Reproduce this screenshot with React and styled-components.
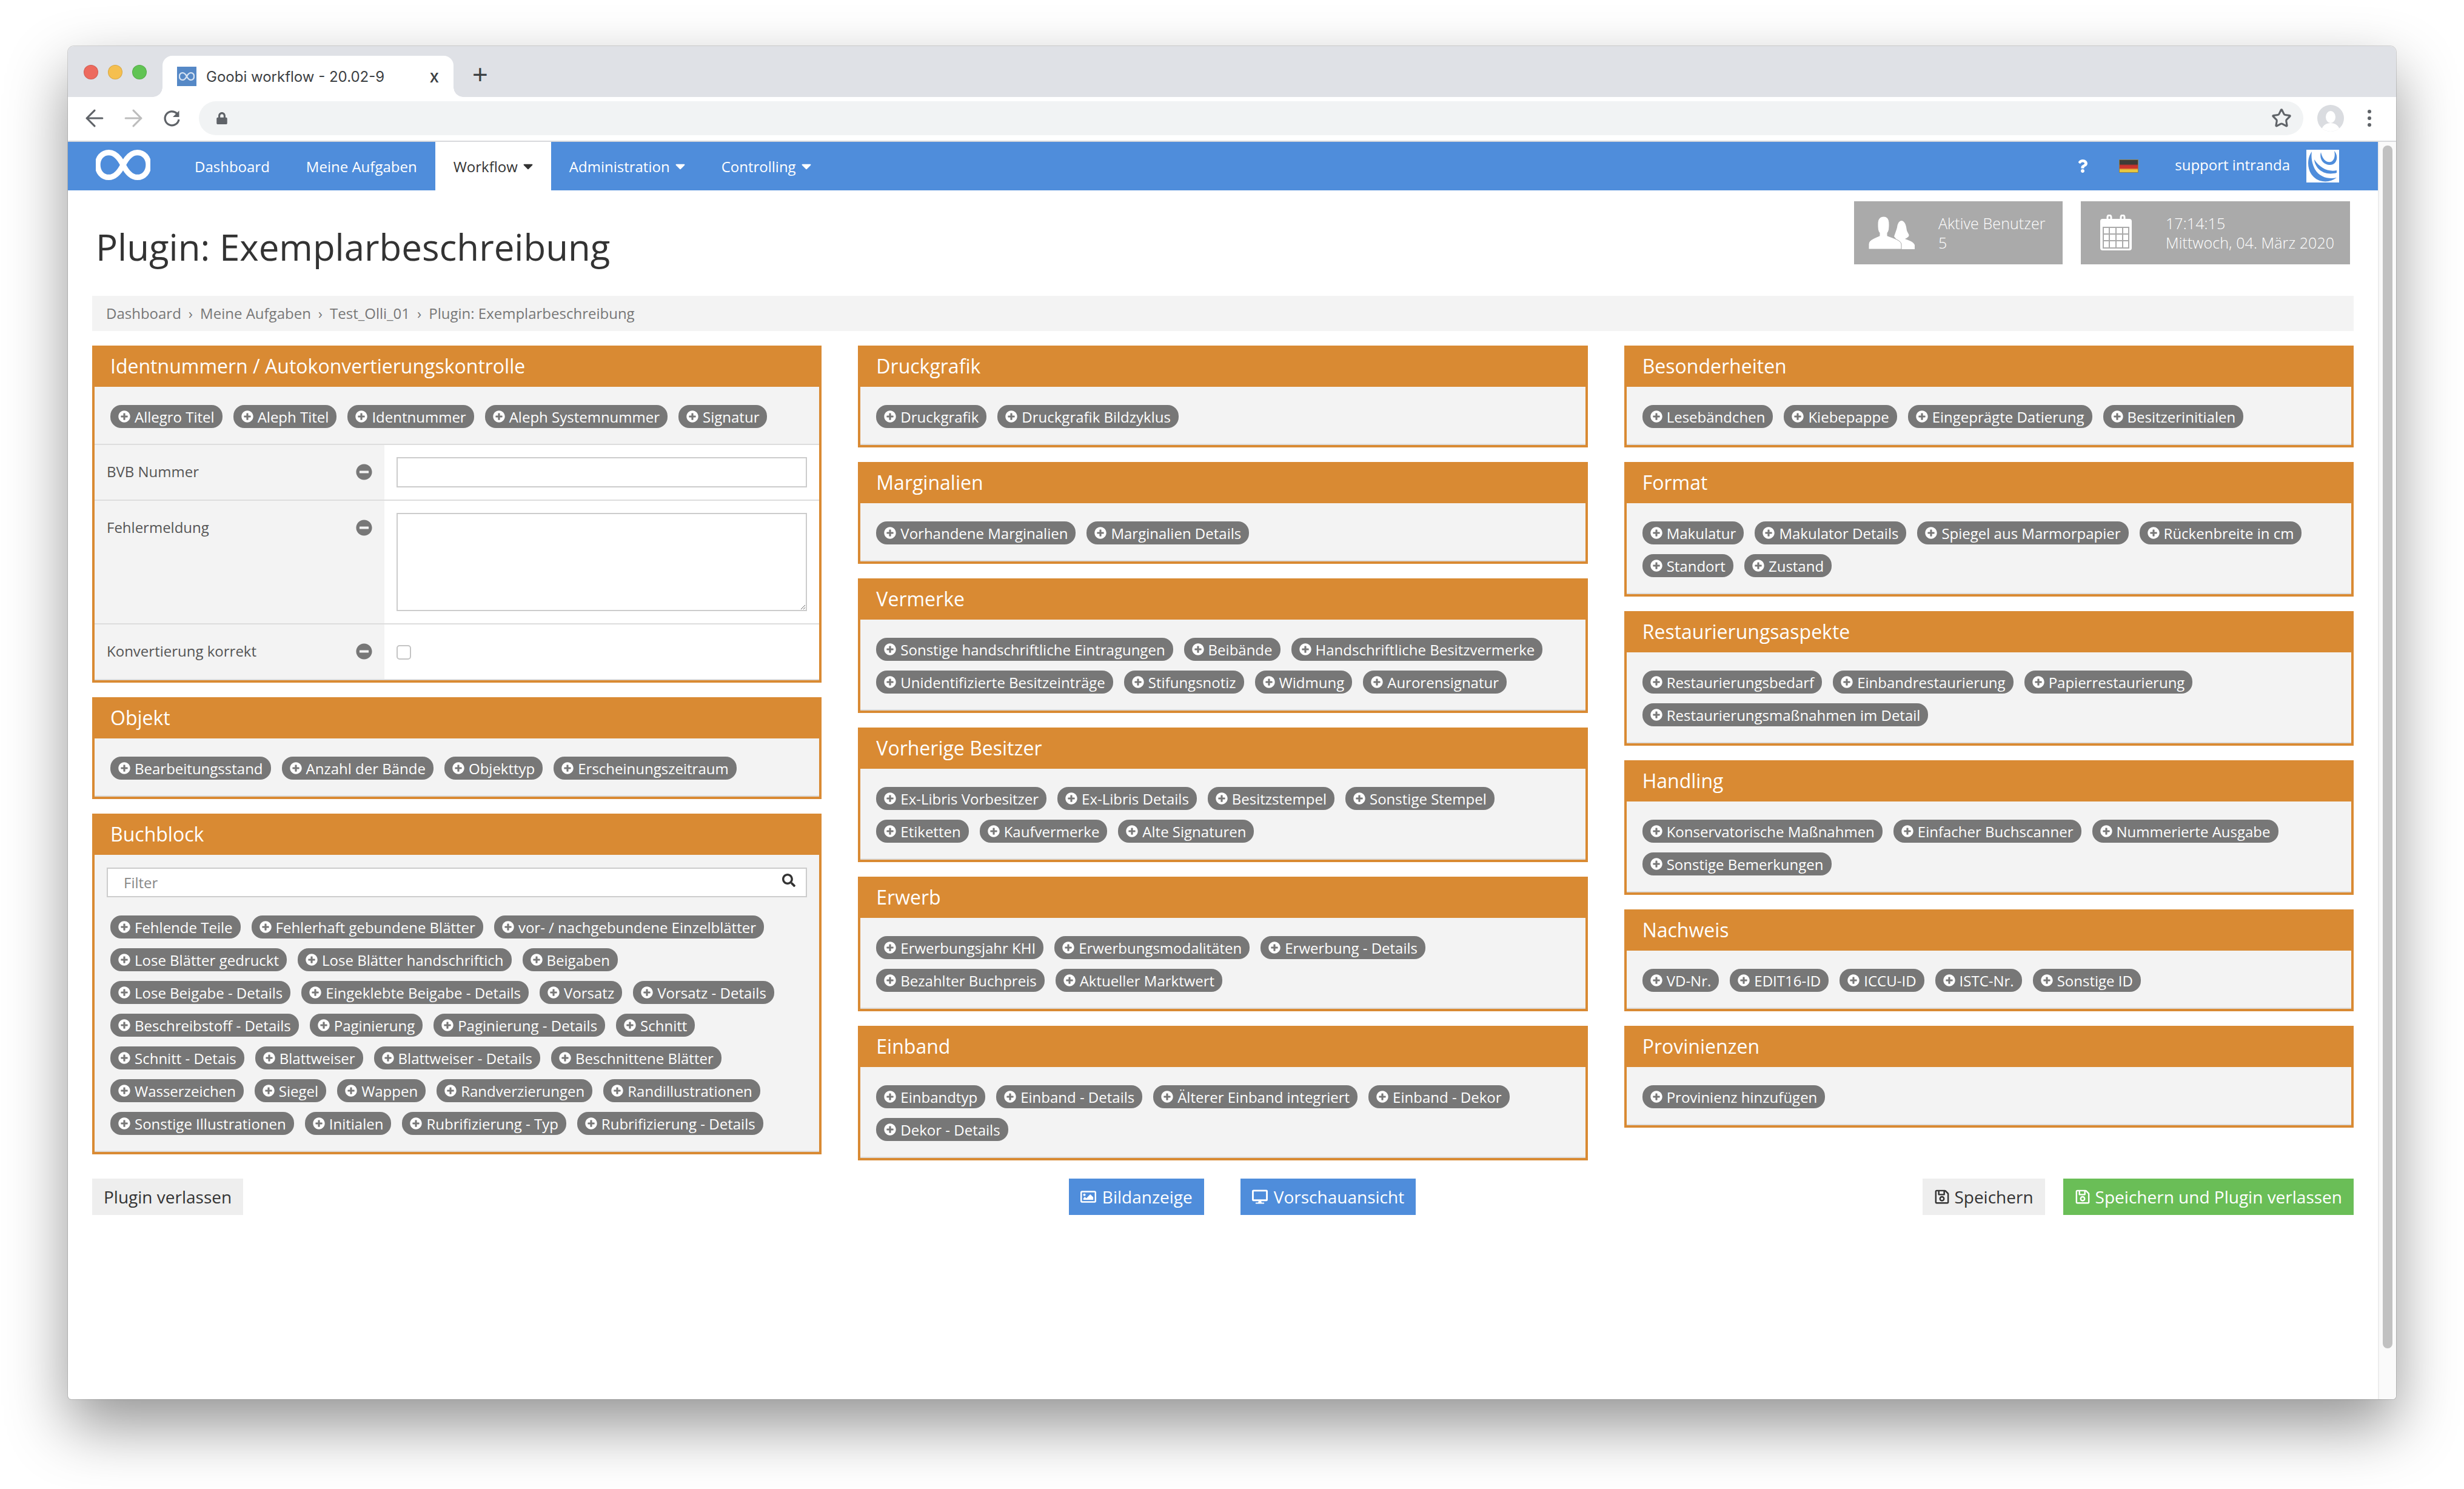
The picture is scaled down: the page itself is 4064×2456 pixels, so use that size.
import React from 'react';
import styled, { createGlobalStyle } from 'styled-components';
import {
  FaPlusCircle, FaMinusCircle, FaSearch, FaRegSave, FaRegImage, FaDesktop, FaQuestion, FaCaretDown, FaLock,
} from 'react-icons/fa';
import { ArrowLeft, ArrowRight, Star } from 'lucide-react';

const ORANGE = '#d98a33';
const BLUE = '#4f8ddb';

const Global = createGlobalStyle`
  html, body { margin: 0; padding: 0; background: #fff; height: 2456px; overflow: hidden; }
  body { font-family: "Open Sans", "Liberation Sans", sans-serif; color: #333; }
  * { box-sizing: border-box; }
`;

const Stage = styled.div`
  padding: 76px 112px 0;
`;

const Win = styled.div`
  width: 3840px;
  height: 2232px;
  display: flex;
  flex-direction: column;
  background: #fff;
  border-radius: 10px 10px 6px 6px;
  overflow: hidden;
  box-shadow: 0 44px 100px rgba(0, 0, 0, 0.42), 0 0 0 1px rgba(0, 0, 0, 0.14);
`;

const TabStrip = styled.div`
  height: 84px;
  flex: none;
  background: #dfe1e6;
  display: flex;
  padding: 16px 0 0 26px;
`;

const Lights = styled.div`
  display: flex;
  gap: 16px;
  padding-top: 15px;
  width: 130px;
`;

const Light = styled.span`
  width: 24px;
  height: 24px;
  border-radius: 50%;
  background: ${p => p.$c};
  border: 1px solid rgba(0, 0, 0, 0.12);
`;

const Tab = styled.div`
  position: relative;
  width: 480px;
  height: 68px;
  background: #fff;
  border-radius: 16px 16px 0 0;
  display: flex;
  align-items: center;
  padding: 0 24px 0 24px;
  font-family: Inter, "Liberation Sans", sans-serif;
  font-size: 24px;
  color: #3c4043;
  &::before, &::after {
    content: '';
    position: absolute;
    bottom: 0;
    width: 16px;
    height: 16px;
  }
  &::before { left: -16px; background: radial-gradient(circle at 0 0, #dfe1e6 15.5px, #fff 16px); }
  &::after { right: -16px; background: radial-gradient(circle at 100% 0, #dfe1e6 15.5px, #fff 16px); }
`;

const Favicon = styled.span`
  width: 32px;
  height: 32px;
  flex: none;
  background: #5588c6;
  display: flex;
  align-items: center;
  justify-content: center;
  margin-right: 16px;
`;

const TabTitle = styled.span`
  flex: 1;
  white-space: nowrap;
`;

const TabClose = styled.span`
  font-size: 28px;
  font-weight: 500;
  color: #3c4043;
`;

const NewTab = styled.span`
  margin-left: 31px;
  font-size: 44px;
  line-height: 62px;
  font-weight: 300;
  color: #3c4043;
  font-family: "Liberation Sans", sans-serif;
`;

const Toolbar = styled.div`
  height: 74px;
  flex: none;
  background: #fff;
  border-bottom: 2px solid #d8d9dc;
  display: flex;
  align-items: center;
  padding: 0 0 2px 22px;
  color: #5f6368;
`;

const NavIcons = styled.div`
  display: flex;
  align-items: center;
  gap: 20px;
  margin-right: 22px;
  width: 172px;
`;

const Omni = styled.div`
  width: 3471px;
  height: 56px;
  background: #f1f3f4;
  border-radius: 28px;
  display: flex;
  align-items: center;
  justify-content: space-between;
  padding: 0 19px 0 28px;
  font-size: 20px;
`;

const ToolbarEnd = styled.div`
  display: flex;
  align-items: center;
  padding-left: 23px;
  gap: 39px;
`;

const Avatar = styled.span`
  width: 44px;
  height: 44px;
  border-radius: 50%;
  background: #dadce0;
  display: flex;
  align-items: flex-end;
  justify-content: center;
  overflow: hidden;
`;

const Dots = styled.span`
  display: flex;
  flex-direction: column;
  gap: 5px;
  i { width: 6px; height: 6px; border-radius: 50%; background: #5f6368; display: block; }
`;

const Viewport = styled.div`
  flex: 1;
  min-height: 0;
  display: flex;
`;

const Main = styled.div`
  flex: 1;
  min-width: 0;
`;

const Scrollbar = styled.div`
  width: 30px;
  flex: none;
  background: #fafafa;
  border-left: 2px solid #ededed;
  padding: 6px 6px 84px 6px;
`;

const Thumb = styled.div`
  height: 1984px;
  background: #c1c1c1;
  border-radius: 8px;
`;

const NavBar = styled.div`
  height: 80px;
  background: ${BLUE};
  display: flex;
  align-items: stretch;
  color: #fff;
  font-size: 24px;
`;

const Logo = styled.div`
  width: 179px;
  padding: 12px 0 0 46px;
  svg { filter: blur(0.7px); }
`;

const NavItem = styled.div`
  display: flex;
  align-items: center;
  gap: 9px;
  padding: 0 30px;
  background: ${p => (p.$active ? '#fff' : 'transparent')};
  color: ${p => (p.$active ? '#333' : '#fff')};
  svg { width: 16px; height: 26px; }
`;

const NavRight = styled.div`
  margin-left: auto;
  display: flex;
  align-items: center;
  padding-right: 64px;
`;

const Flag = styled.span`
  width: 32px;
  height: 22px;
  margin-left: 49px;
  margin-right: 60px;
  background: linear-gradient(#3c3c38 0 33%, #c9332d 45% 66%, #e8c840 80% 100%);
  border: 1px solid #8c8050;
`;

const UserName = styled.span`
  margin-right: 27px;
  padding-bottom: 6px;
`;

const UserLogo = styled.span`
  width: 54px;
  height: 54px;
  background: #fff;
  display: block;
`;

const Content = styled.div`
  padding: 0 40px;
`;

const HeadRow = styled.div`
  height: 174px;
  display: flex;
  align-items: flex-start;
  padding: 18px 6px 0 6px;
`;

const Title = styled.h1`
  margin: 34px auto 0 0;
  font-size: 60px;
  line-height: 82px;
  font-weight: 400;
  color: #333;
  white-space: nowrap;
`;

const Stat = styled.div`
  height: 104px;
  width: ${p => p.$w}px;
  margin-left: ${p => p.$ml}px;
  background: #aaa;
  color: #fff;
  display: flex;
  align-items: center;
  padding-left: ${p => p.$pl}px;
  font-size: 25px;
  font-weight: 300;
  letter-spacing: 0.1px;
`;

const StatText = styled.div`
  margin-left: ${p => p.$ml}px;
  line-height: 32px;
  white-space: nowrap;
`;

const Crumbs = styled.div`
  height: 58px;
  background: #f3f3f3;
  display: flex;
  align-items: center;
  padding: 0 23px 2px;
  font-size: 24px;
  color: #777;
  margin-bottom: 24px;
  span + span::before {
    content: '›';
    margin: 0 12px;
    color: #777;
  }
`;

const Columns = styled.div`
  display: grid;
  grid-template-columns: repeat(3, 1fr);
  column-gap: 60px;
  align-items: start;
`;

const Column = styled.div`
  display: flex;
  flex-direction: column;
  gap: 24px;
`;

const Panel = styled.section`
  border: 4px solid ${ORANGE};
  border-top: 0;
  background: #f3f3f3;
`;

const PanelHead = styled.h3`
  margin: 0 -4px;
  height: 68px;
  background: ${ORANGE};
  color: #fff;
  font-size: 32px;
  font-weight: 400;
  line-height: 68px;
  padding-left: 30px;
`;

const PanelBody = styled.div`
  padding: 30px 26px 26px;
  border-bottom: 2px solid #ddd;
`;

const TagList = styled.div`
  display: flex;
  flex-wrap: wrap;
  gap: 16px 18px;
`;

const Tag = styled.span`
  height: 38px;
  display: inline-flex;
  align-items: center;
  gap: 7px;
  padding: 0 13px;
  border-radius: 18px;
  background: #777;
  color: #fff;
  font-size: 24px;
  white-space: nowrap;
  svg { font-size: 20px; flex: none; }
`;

const FormRow = styled.div`
  display: grid;
  grid-template-columns: 478px 1fr;
  border-bottom: 2px solid #ddd;
  background: #fff;
`;

const FormLabel = styled.div`
  background: #f3f3f3;
  display: flex;
  justify-content: space-between;
  align-items: flex-start;
  padding: 28px 20px 0;
  font-size: 24px;
  line-height: 32px;
  color: #555;
  svg { font-size: 27px; color: #777; margin-top: 3px; }
`;

const FormValue = styled.div`
  padding: ${p => (p.$check ? '34px 20px 32px' : '20px')};
  display: flex;
`;

const TextInput = styled.input`
  width: 100%;
  height: 50px;
  border: 2px solid #ccc;
  background: #fff;
  display: block;
  outline: none;
`;

const TextArea = styled.textarea`
  width: 100%;
  height: 162px;
  border: 2px solid #ccc;
  background: #fff;
  display: block;
  outline: none;
`;

const Check = styled.input`
  appearance: none;
  width: 24px;
  height: 24px;
  margin: 0;
  border: 2px solid #c4c4c4;
  border-radius: 5px;
  background: #fff;
`;

const FilterWrap = styled.div`
  position: relative;
  margin: 21px 20px 30px;
`;

const FilterInput = styled(TextInput)`
  height: 49px;
  padding: 0 26px;
  font-family: inherit;
  font-size: 24px;
  &::placeholder { color: #888; opacity: 1; }
`;

const FilterIcon = styled(FaSearch)`
  position: absolute;
  right: 19px;
  top: 10px;
  font-size: 22px;
  color: #333;
`;

const TagsBelow = styled.div`
  padding: 0 26px 26px;
  border-bottom: 2px solid #ddd;
`;

const Actions = styled.div`
  display: grid;
  grid-template-columns: 1fr auto 1fr;
  margin-top: 30px;
`;

const ActionGroup = styled.div`
  display: flex;
  gap: ${p => p.$gap || 0}px;
  justify-content: ${p => (p.$end ? 'flex-end' : 'flex-start')};
  margin-left: ${p => p.$ml || 0}px;
`;

const Btn = styled.button`
  height: 60px;
  border: 0;
  padding: 0 19px;
  display: inline-flex;
  align-items: center;
  gap: ${p => p.$gap || 10}px;
  font-family: inherit;
  font-size: 28px;
  white-space: nowrap;
  background: ${p => p.$bg || '#eee'};
  color: ${p => p.$fg || '#333'};
  svg { font-size: 26px; }
`;

const InfinityMark = ({ w, h, sw, color = '#fff' }) => (
  <svg width={w} height={h} viewBox="0 0 88 50">
    <path
      d="M44 25C38 13 30 5 21 5C10 5 3 14 3 25C3 36 10 45 21 45C30 45 38 37 44 25C50 13 58 5 67 5C78 5 85 14 85 25C85 36 78 45 67 45C58 45 50 37 44 25Z"
      fill="none"
      stroke={color}
      strokeWidth={sw}
    />
  </svg>
);

const Reload = () => (
  <svg width="44" height="44" viewBox="0 0 44 44" fill="none">
    <path d="M33 24a11.5 11.5 0 1 1-3.4-10" stroke="#5f6368" strokeWidth="3.2" />
    <path d="M33.5 9.500v10.500h-10.500z" fill="#5f6368" />
  </svg>
);

const Swirl = () => (
  <svg width="54" height="54" viewBox="0 0 54 54" fill={BLUE}>
    <path d="M9 3C-2 18 2 44 22 51C32 54 42 52 50 46C38 49 22 46 14 32C8 20 8 10 9 3Z" />
    <path d="M13 16C14 30 28 44 50 38L50 34C36 37 22 30 13 16Z" />
    <path d="M24 4C20 18 32 28 44 24C52 20 52 8 46 2C48 10 46 18 40 20C32 22 26 14 24 4Z" />
  </svg>
);

const Users = () => (
  <svg width="76" height="54" viewBox="0 0 76 54" fill="#fff">
    <path d="M52 54V44C52 42 50 40 46 38L42 33C44 27 46 22 47 18C48 9 53 5 57 8C62 12 62 18 63 23C64 27 68 30 66 33C64 35 62 36 60 37C64 39 74 41 76 47V54Z" />
    <path d="M0 54V46C0 40 6 37 18 32V27C15 24 15 18 15 12C15 4 19 0 25 0C31 0 34 5 34 12C34 18 34 24 31 27V32C42 36 54 40 54 46V54Z" stroke="#aaa" strokeWidth="1" />
  </svg>
);

const Calendar = () => (
  <svg width="54" height="60" viewBox="0 0 54 60">
    <rect x="1" y="7" width="52" height="52" rx="4" fill="#fff" />
    <g stroke="#aaa" strokeWidth="2" fill="none">
      <path d="M6 21H48V55H6ZM6 32H48M6 43H48M16 21V55M27 21V55M38 21V55" />
      <path d="M13 14V4a3 3 0 0 1 6 0V14M35 14V4a3 3 0 0 1 6 0V14" stroke="#fff" strokeWidth="3" />
    </g>
  </svg>
);

const Pills = ({ items }) => (
  <TagList>
    {items.map(t => (
      <Tag key={t}>
        <FaPlusCircle />
        {t}
      </Tag>
    ))}
  </TagList>
);

const Box = ({ title, items }) => (
  <Panel>
    <PanelHead>{title}</PanelHead>
    <PanelBody>
      <Pills items={items} />
    </PanelBody>
  </Panel>
);

const col2 = [
  ['Druckgrafik', ['Druckgrafik', 'Druckgrafik Bildzyklus']],
  ['Marginalien', ['Vorhandene Marginalien', 'Marginalien Details']],
  ['Vermerke', ['Sonstige handschriftliche Eintragungen', 'Beibände', 'Handschriftliche Besitzvermerke', 'Unidentifizierte Besitzeinträge', 'Stifungsnotiz', 'Widmung', 'Aurorensignatur']],
  ['Vorherige Besitzer', ['Ex-Libris Vorbesitzer', 'Ex-Libris Details', 'Besitzstempel', 'Sonstige Stempel', 'Etiketten', 'Kaufvermerke', 'Alte Signaturen']],
  ['Erwerb', ['Erwerbungsjahr KHI', 'Erwerbungsmodalitäten', 'Erwerbung - Details', 'Bezahlter Buchpreis', 'Aktueller Marktwert']],
  ['Einband', ['Einbandtyp', 'Einband - Details', 'Älterer Einband integriert', 'Einband - Dekor', 'Dekor - Details']],
];

const col3 = [
  ['Besonderheiten', ['Lesebändchen', 'Kiebepappe', 'Eingeprägte Datierung', 'Besitzerinitialen']],
  ['Format', ['Makulatur', 'Makulator Details', 'Spiegel aus Marmorpapier', 'Rückenbreite in cm', 'Standort', 'Zustand']],
  ['Restaurierungsaspekte', ['Restaurierungsbedarf', 'Einbandrestaurierung', 'Papierrestaurierung', 'Restaurierungsmaßnahmen im Detail']],
  ['Handling', ['Konservatorische Maßnahmen', 'Einfacher Buchscanner', 'Nummerierte Ausgabe', 'Sonstige Bemerkungen']],
  ['Nachweis', ['VD-Nr.', 'EDIT16-ID', 'ICCU-ID', 'ISTC-Nr.', 'Sonstige ID']],
  ['Provinienzen', ['Provinienz hinzufügen']],
];

const buchblock = [
  'Fehlende Teile', 'Fehlerhaft gebundene Blätter', 'vor- / nachgebundene Einzelblätter',
  'Lose Blätter gedruckt', 'Lose Blätter handschriftich', 'Beigaben',
  'Lose Beigabe - Details', 'Eingeklebte Beigabe - Details', 'Vorsatz', 'Vorsatz - Details',
  'Beschreibstoff - Details', 'Paginierung', 'Paginierung - Details', 'Schnitt',
  'Schnitt - Detais', 'Blattweiser', 'Blattweiser - Details', 'Beschnittene Blätter',
  'Wasserzeichen', 'Siegel', 'Wappen', 'Randverzierungen', 'Randillustrationen',
  'Sonstige Illustrationen', 'Initialen', 'Rubrifizierung - Typ', 'Rubrifizierung - Details',
];

export default function App() {
  return (
    <Stage>
      <Global />
      <Win>
        <TabStrip>
          <Lights>
            <Light $c="#ed6a5e" />
            <Light $c="#f5bf4f" />
            <Light $c="#61c454" />
          </Lights>
          <Tab>
            <Favicon>
              <InfinityMark w={26} h={16} sw={8} color="#d5e2f2" />
            </Favicon>
            <TabTitle>Goobi workflow - 20.02-9</TabTitle>
            <TabClose>x</TabClose>
          </Tab>
          <NewTab>+</NewTab>
        </TabStrip>
        <Toolbar>
          <NavIcons>
            <ArrowLeft size={44} strokeWidth={1.7} />
            <ArrowRight size={44} strokeWidth={1.7} color="#bdbdbd" />
            <Reload />
          </NavIcons>
          <Omni>
            <FaLock />
            <Star size={34} strokeWidth={2.2} color="#5f6368" />
          </Omni>
          <ToolbarEnd>
            <Avatar>
              <svg width="30" height="36" viewBox="0 0 30 36" fill="#fff">
                <ellipse cx="15" cy="12" rx="8" ry="10" />
                <path d="M0 36C0 26 8 22 15 22C22 22 30 26 30 36Z" />
              </svg>
            </Avatar>
            <Dots><i /><i /><i /></Dots>
          </ToolbarEnd>
        </Toolbar>
        <Viewport>
          <Main>
            <NavBar>
              <Logo>
                <InfinityMark w={90} h={52} sw={9} />
              </Logo>
              <NavItem>Dashboard</NavItem>
              <NavItem>Meine Aufgaben</NavItem>
              <NavItem $active>Workflow <FaCaretDown /></NavItem>
              <NavItem>Administration <FaCaretDown /></NavItem>
              <NavItem>Controlling <FaCaretDown /></NavItem>
              <NavRight>
                <FaQuestion size={22} />
                <Flag />
                <UserName>support intranda</UserName>
                <UserLogo><Swirl /></UserLogo>
              </NavRight>
            </NavBar>
            <Content>
              <HeadRow>
                <Title>Plugin: Exemplarbeschreibung</Title>
                <Stat $w={344} $ml={0} $pl={24}>
                  <Users />
                  <StatText $ml={39}>Aktive Benutzer<br />5</StatText>
                </Stat>
                <Stat $w={444} $ml={30} $pl={31}>
                  <Calendar />
                  <StatText $ml={55}>17:14:15<br />Mittwoch, 04. März 2020</StatText>
                </Stat>
              </HeadRow>
              <Crumbs>
                <span>Dashboard</span>
                <span>Meine Aufgaben</span>
                <span>Test_Olli_01</span>
                <span>Plugin: Exemplarbeschreibung</span>
              </Crumbs>
              <Columns>
                <Column>
                  <Panel>
                    <PanelHead>Identnummern / Autokonvertierungskontrolle</PanelHead>
                    <PanelBody>
                      <Pills items={['Allegro Titel', 'Aleph Titel', 'Identnummer', 'Aleph Systemnummer', 'Signatur']} />
                    </PanelBody>
                    <FormRow>
                      <FormLabel>BVB Nummer <FaMinusCircle /></FormLabel>
                      <FormValue><TextInput /></FormValue>
                    </FormRow>
                    <FormRow>
                      <FormLabel>Fehlermeldung <FaMinusCircle /></FormLabel>
                      <FormValue><TextArea /></FormValue>
                    </FormRow>
                    <FormRow>
                      <FormLabel>Konvertierung korrekt <FaMinusCircle /></FormLabel>
                      <FormValue $check><Check type="checkbox" /></FormValue>
                    </FormRow>
                  </Panel>
                  <Box title="Objekt" items={['Bearbeitungsstand', 'Anzahl der Bände', 'Objekttyp', 'Erscheinungszeitraum']} />
                  <Panel>
                    <PanelHead>Buchblock</PanelHead>
                    <FilterWrap>
                      <FilterInput placeholder="Filter" />
                      <FilterIcon />
                    </FilterWrap>
                    <TagsBelow>
                      <Pills items={buchblock} />
                    </TagsBelow>
                  </Panel>
                </Column>
                <Column>
                  {col2.map(([t, items]) => <Box key={t} title={t} items={items} />)}
                </Column>
                <Column>
                  {col3.map(([t, items]) => <Box key={t} title={t} items={items} />)}
                </Column>
              </Columns>
              <Actions>
                <ActionGroup>
                  <Btn>Plugin verlassen</Btn>
                </ActionGroup>
                <ActionGroup $gap={60} $ml={64}>
                  <Btn $bg={BLUE} $fg="#fff"><FaRegImage />Bildanzeige</Btn>
                  <Btn $bg={BLUE} $fg="#fff"><FaDesktop />Vorschauansicht</Btn>
                </ActionGroup>
                <ActionGroup $gap={30} $end>
                  <Btn $gap={7}><FaRegSave />Speichern</Btn>
                  <Btn $gap={8} $bg="#6abe57" $fg="#fff"><FaRegSave />Speichern und Plugin verlassen</Btn>
                </ActionGroup>
              </Actions>
            </Content>
          </Main>
          <Scrollbar><Thumb /></Scrollbar>
        </Viewport>
      </Win>
    </Stage>
  );
}
